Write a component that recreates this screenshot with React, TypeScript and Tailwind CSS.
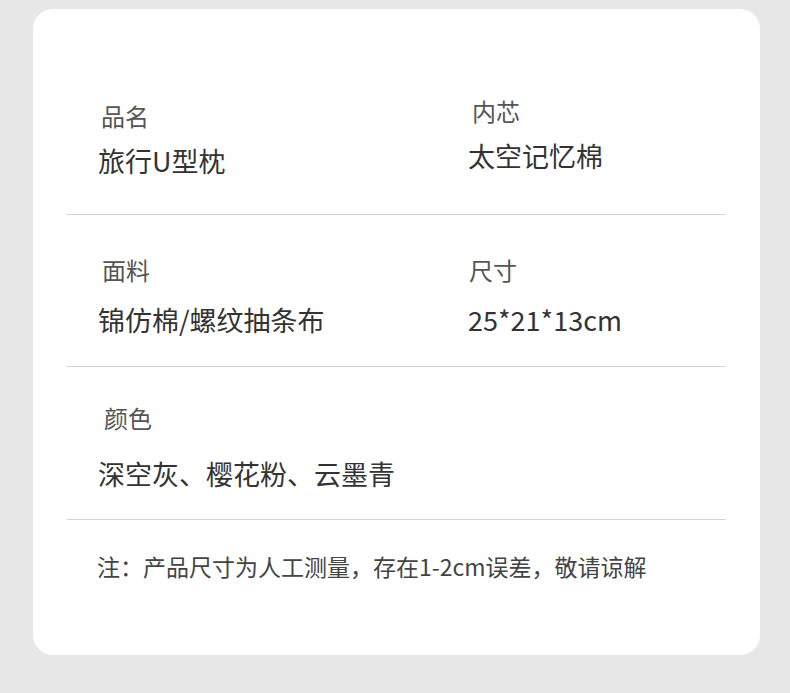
import React from "react";

const font = { fontFamily: '"Noto Sans CJK SC", "Noto Sans", sans-serif' };

export default function App() {
  return (
    <div className="w-[790px] h-[693px] bg-[#e7e7e7] pt-[9px] pl-[33px]" style={font}>
      <div className="w-[727px] h-[646px] bg-white rounded-[20px] px-[34px] pt-[86px]">
        {/* Row 1 */}
        <div className="grid grid-cols-[370px_1fr] pl-[31px] pb-[35px] border-b border-[#d4d4d4]">
          <div className="mt-[5px]">
            <div className="ml-[3px] text-[24px] leading-[32px] text-[#555]">品名</div>
            <div className="mt-[11px] text-[27px] leading-[36px] text-[#333]">旅行U型枕</div>
          </div>
          <div>
            <div className="ml-[4px] text-[24px] leading-[32px] text-[#555]">内芯</div>
            <div className="mt-[11px] text-[27px] leading-[36px] text-[#333]">太空记忆棉</div>
          </div>
        </div>
        {/* Row 2 */}
        <div className="grid grid-cols-[370px_1fr] pl-[31px] pt-[39px] pb-[28px] border-b border-[#d4d4d4]">
          <div>
            <div className="ml-[4px] text-[24px] leading-[32px] text-[#555]">面料</div>
            <div className="mt-[16px] text-[27px] leading-[36px] text-[#333]">锦仿棉/螺纹抽条布</div>
          </div>
          <div>
            <div className="ml-[1px] text-[24px] leading-[32px] text-[#555]">尺寸</div>
            <div className="mt-[16px] text-[27px] leading-[36px] text-[#333]">25*21*13cm</div>
          </div>
        </div>
        {/* Row 3 */}
        <div className="pl-[31px] pt-[35px] pb-[27px] border-b border-[#d4d4d4]">
          <div className="ml-[6px] text-[24px] leading-[32px] text-[#555]">颜色</div>
          <div className="mt-[22px] text-[27px] leading-[36px] text-[#333]">深空灰、樱花粉、云墨青</div>
        </div>
        {/* Note */}
        <div className="pl-[30px] pt-[30px] text-[23px] leading-[32px] text-[#444]">
          注：产品尺寸为人工测量，存在1-2cm误差，敬请谅解
        </div>
      </div>
    </div>
  );
}
